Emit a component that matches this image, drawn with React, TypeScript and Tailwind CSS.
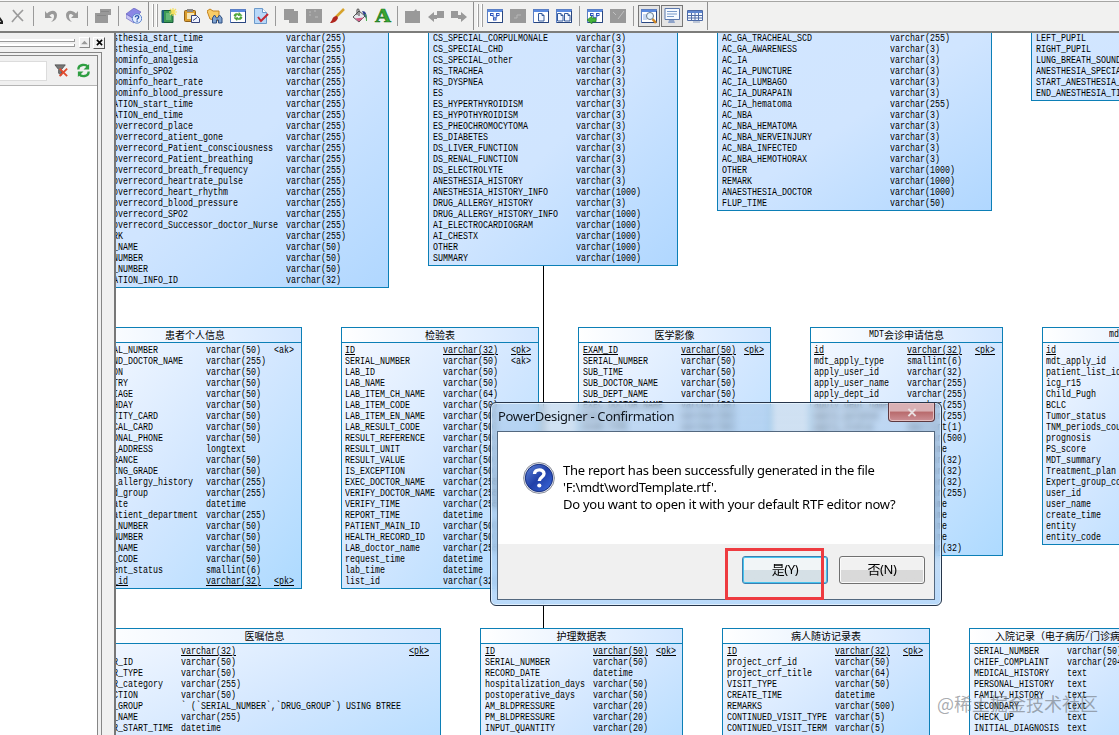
import type { ReactNode } from 'react';

type Row = [name: string, type?: string, key?: string];

interface EntityProps {
  title?: string;
  x: number;
  y: number;
  width: number;
  height: number;
  nameX: number;
  typeX: number;
  keyX?: number;
  rows: Row[];
}

const v = (n: number) => `varchar(${n})`;

const entities: EntityProps[] = [
  {
    x: -36, y: -7, width: 309, height: 262, nameX: 32, typeX: 205,
    rows: [
      ['sthesia_start_time', v(255)],
      ['sthesia_end_time', v(255)],
      ['oominfo_analgesia', v(255)],
      ['oominfo_SPO2', v(255)],
      ['oominfo_heart_rate', v(255)],
      ['oominfo_blood_pressure', v(255)],
      ['ATION_start_time', v(255)],
      ['ATION_end_time', v(255)],
      ['overrecord_place', v(255)],
      ['overrecord_atient_gone', v(255)],
      ['overrecord_Patient_consciousness', v(255)],
      ['overrecord_Patient_breathing', v(255)],
      ['overrecord_breath_frequency', v(255)],
      ['overrecord_heartrate_pulse', v(255)],
      ['overrecord_heart_rhythm', v(255)],
      ['overrecord_blood_pressure', v(255)],
      ['overrecord_SPO2', v(255)],
      ['overrecord_Successor_doctor_Nurse', v(255)],
      ['RK', v(255)],
      ['_NAME', v(50)],
      ['NUMBER', v(50)],
      ['_NUMBER', v(50)],
      ['ATION_INFO_ID', v(32)],
    ],
  },
  {
    x: 312, y: -7, width: 250, height: 240, nameX: 4, typeX: 147,
    rows: [
      ['CS_SPECIAL_CORPULMONALE', v(3)],
      ['CS_SPECIAL_CHD', v(3)],
      ['CS_SPECIAL_other', v(3)],
      ['RS_TRACHEA', v(3)],
      ['RS_DYSPNEA', v(3)],
      ['ES', v(3)],
      ['ES_HYPERTHYROIDISM', v(3)],
      ['ES_HYPOTHYROIDISM', v(3)],
      ['ES_PHEOCHROMOCYTOMA', v(3)],
      ['ES_DIABETES', v(3)],
      ['DS_LIVER_FUNCTION', v(3)],
      ['DS_RENAL_FUNCTION', v(3)],
      ['DS_ELECTROLYTE', v(3)],
      ['ANESTHESIA_HISTORY', v(3)],
      ['ANESTHESIA_HISTORY_INFO', v(1000)],
      ['DRUG_ALLERGY_HISTORY', v(3)],
      ['DRUG_ALLERGY_HISTORY_INFO', v(1000)],
      ['AI_ELECTROCARDIOGRAM', v(1000)],
      ['AI_CHESTX', v(1000)],
      ['OTHER', v(1000)],
      ['SUMMARY', v(1000)],
    ],
  },
  {
    x: 601, y: -7, width: 275, height: 185, nameX: 4, typeX: 172,
    rows: [
      ['AC_GA_TRACHEAL_SCD', v(255)],
      ['AC_GA_AWARENESS', v(3)],
      ['AC_IA', v(3)],
      ['AC_IA_PUNCTURE', v(3)],
      ['AC_IA_LUMBAGO', v(3)],
      ['AC_IA_DURAPAIN', v(3)],
      ['AC_IA_hematoma', v(255)],
      ['AC_NBA', v(3)],
      ['AC_NBA_HEMATOMA', v(3)],
      ['AC_NBA_NERVEINJURY', v(3)],
      ['AC_NBA_INFECTED', v(3)],
      ['AC_NBA_HEMOTHORAX', v(3)],
      ['OTHER', v(1000)],
      ['REMARK', v(1000)],
      ['ANAESTHESIA_DOCTOR', v(1000)],
      ['FLUP_TIME', v(50)],
    ],
  },
  {
    x: 915, y: -7, width: 220, height: 75, nameX: 4, typeX: 180,
    rows: [
      ['LEFT_PUPIL'],
      ['RIGHT_PUPIL'],
      ['LUNG_BREATH_SOUND'],
      ['ANESTHESIA_SPECIAL'],
      ['START_ANESTHESIA_TIME'],
      ['END_ANESTHESIA_TIME'],
    ],
  },
  {
    title: '患者个人信息',
    x: -28, y: 294, width: 214, height: 262, nameX: 24, typeX: 117, keyX: 185,
    rows: [
      ['AL_NUMBER', v(50), '<ak>'],
      ['ND_DOCTOR_NAME', v(255)],
      ['ON', v(50)],
      ['TRY', v(50)],
      ['IAGE', v(50)],
      ['HDAY', v(50)],
      ['TITY_CARD', v(50)],
      ['CAL_CARD', v(50)],
      ['ONAL_PHONE', v(50)],
      ['_ADDRESS', 'longtext'],
      ['RANCE', v(50)],
      ['ING_GRADE', v(50)],
      ['_allergy_history', v(255)],
      ['d_group', v(255)],
      ['ate', 'datetime'],
      ['atient_department', v(255)],
      ['_NUMBER', v(50)],
      ['NUMBER', v(50)],
      ['_NAME', v(50)],
      ['_CODE', v(50)],
      ['ent_status', 'smallint(6)'],
      ['_id', v(32), '<pk>'],
    ],
  },
  {
    title: '检验表',
    x: 225, y: 294, width: 198, height: 262, nameX: 3, typeX: 101, keyX: 169,
    rows: [
      ['ID', v(32), '<pk>'],
      ['SERIAL_NUMBER', v(50), '<ak>'],
      ['LAB_ID', v(50)],
      ['LAB_NAME', v(50)],
      ['LAB_ITEM_CH_NAME', v(64)],
      ['LAB_ITEM_CODE', v(50)],
      ['LAB_ITEM_EN_NAME', v(50)],
      ['LAB_RESULT_CODE', v(50)],
      ['RESULT_REFERENCE', v(50)],
      ['RESULT_UNIT', v(50)],
      ['RESULT_VALUE', v(50)],
      ['IS_EXCEPTION', v(50)],
      ['EXEC_DOCTOR_NAME', v(255)],
      ['VERIFY_DOCTOR_NAME', v(255)],
      ['VERIFY_TIME', v(255)],
      ['REPORT_TIME', 'datetime'],
      ['PATIENT_MAIN_ID', v(50)],
      ['HEALTH_RECORD_ID', v(50)],
      ['LAB_doctor_name', v(255)],
      ['request_time', 'datetime'],
      ['lab_time', 'datetime'],
      ['list_id', v(32)],
    ],
  },
  {
    title: '医学影像',
    x: 462, y: 294, width: 193, height: 240, nameX: 4, typeX: 102, keyX: 165,
    rows: [
      ['EXAM_ID', v(50), '<pk>'],
      ['SERIAL_NUMBER', v(50)],
      ['SUB_TIME', v(50)],
      ['SUB_DOCTOR_NAME', v(50)],
      ['SUB_DEPT_NAME', v(50)],
      ['EXEC_DOCTOR_NAME', v(50)],
      ['EXEC_TIME', v(50)],
      ['EXAM_TYPE', v(50)],
    ],
  },
  {
    title: 'MDT会诊申请信息',
    x: 694, y: 294, width: 193, height: 229, nameX: 3, typeX: 96, keyX: 164,
    rows: [
      ['id', v(32), '<pk>'],
      ['mdt_apply_type', 'smallint(6)'],
      ['apply_user_id', v(32)],
      ['apply_user_name', v(255)],
      ['apply_dept_id', v(255)],
      ['apply_dept_name', v(255)],
      ['apply_purpose', v(255)],
      ['apply_status', 'smallint(1)'],
      ['remark', v(500)],
      ['apply_time', 'datetime'],
      ['serial_id', v(32)],
      ['patient_id', v(32)],
      ['user_id', v(32)],
      ['user_name', v(255)],
      ['start_time', 'datetime'],
      ['end_time', 'datetime'],
      ['create_time', 'datetime'],
      ['update_time', 'datetime'],
      ['entity_code', v(32)],
    ],
  },
  {
    title: 'mdt会诊',
    x: 926, y: 294, width: 168, height: 218, nameX: 3, typeX: 110,
    rows: [
      ['id', v(32), ''],
      ['mdt_apply_id'],
      ['patient_list_id'],
      ['icg_r15'],
      ['Child_Pugh'],
      ['BCLC'],
      ['Tumor_status'],
      ['TNM_periods_count'],
      ['prognosis'],
      ['PS_score'],
      ['MDT_summary'],
      ['Treatment_plan'],
      ['Expert_group_code'],
      ['user_id'],
      ['user_name'],
      ['create_time'],
      ['entity'],
      ['entity_code'],
    ],
  },
  {
    title: '医嘱信息',
    x: -28, y: 595, width: 353, height: 160, nameX: 24, typeX: 92, keyX: 320,
    rows: [
      ['', v(32), '<pk>'],
      ['R_ID', v(50)],
      ['R_TYPE', v(50)],
      ['R_category', v(255)],
      ['CTION', v(50)],
      ['_GROUP', '` (`SERIAL_NUMBER`,`DRUG_GROUP`) USING BTREE'],
      ['_NAME', v(255)],
      ['R_START_TIME', 'datetime'],
    ],
  },
  {
    title: '护理数据表',
    x: 364, y: 595, width: 203, height: 160, nameX: 4, typeX: 112, keyX: 175,
    rows: [
      ['ID', v(50), '<pk>'],
      ['SERIAL_NUMBER', v(50)],
      ['RECORD_DATE', 'datetime'],
      ['hospitalization_days', v(50)],
      ['postoperative_days', v(50)],
      ['AM_BLDPRESSURE', v(20)],
      ['PM_BLDPRESSURE', v(20)],
      ['INPUT_QUANTITY', v(20)],
    ],
  },
  {
    title: '病人随访记录表',
    x: 606, y: 595, width: 208, height: 160, nameX: 4, typeX: 112, keyX: 180,
    rows: [
      ['ID', v(32), '<pk>'],
      ['project_crf_id', v(50)],
      ['project_crf_title', v(64)],
      ['VISIT_TYPE', v(50)],
      ['CREATE_TIME', 'datetime'],
      ['REMARKS', v(500)],
      ['CONTINUED_VISIT_TYPE', v(5)],
      ['CONTINUED_VISIT_TERM', v(5)],
    ],
  },
  {
    title: '入院记录（电子病历/门诊病历）',
    x: 853, y: 595, width: 197, height: 160, nameX: 4, typeX: 97,
    rows: [
      ['SERIAL_NUMBER', v(50)],
      ['CHIEF_COMPLAINT', v(2048)],
      ['MEDICAL_HISTORY', 'text'],
      ['PERSONAL_HISTORY', 'text'],
      ['FAMILY_HISTORY', 'text'],
      ['SECONDARY', 'text'],
      ['CHECK_UP', 'text'],
      ['INITIAL_DIAGNOSIS', 'text'],
    ],
  },
];

// Condensed monospace cell text, 5px per character
const Cell = ({ children, underline }: { children?: string; underline?: boolean }) => (
  <span className="w-0 whitespace-pre">
    <span className={`inline-block origin-left scale-x-[0.833] ${underline ? 'underline underline-offset-1' : ''}`}>
      {children}
    </span>
  </span>
);

const Entity = ({ title, x, y, width, height, nameX, typeX, keyX = typeX + 68, rows }: EntityProps) => (
  <div
    className={`absolute flex flex-col border border-[#0c7fb6] bg-linear-to-br font-['Liberation_Mono','Noto_Sans_CJK_SC',monospace] text-[10px] leading-[11px] text-black ${
      title ? 'from-[#f6f9ff] via-[#d3e7ff] to-[#addAff]' : 'from-[#d2e6ff] via-[#d0e5ff] to-[#b0d7ff]'
    }`}
    style={{ left: x, top: y, width, height }}
  >
    {title && (
      <div className="flex h-[15px] shrink-0 items-center justify-center whitespace-nowrap border-b border-[#0c7fb6] bg-linear-to-r from-white to-[#d4e7ff] pb-[2px]">
        {title.split(/([ -~]+)/).filter(Boolean).map((part, index) =>
          /^[ -~]/.test(part) ? (
            <span key={index} className="pt-px" style={{ width: part.length * 5 }}>
              <Cell>{part}</Cell>
            </span>
          ) : (
            <span key={index} className="font-['Noto_Sans_CJK_SC',sans-serif]">{part}</span>
          )
        )}
      </div>
    )}
    <div className={title ? 'pt-[2px]' : 'pt-[6px]'}>
      {rows.map(([name, type, key], index) => {
        const underline = key === '<pk>' || key === '';
        return (
          <div
            key={index}
            className="grid h-[11px]"
            style={{ paddingLeft: nameX, gridTemplateColumns: `${typeX - nameX}px ${keyX - typeX}px 1fr` }}
          >
            <Cell underline={underline}>{name}</Cell>
            <Cell underline={underline}>{type}</Cell>
            <Cell underline={underline}>{key}</Cell>
          </div>
        );
      })}
    </div>
  </div>
);

const Icon = ({ children }: { children: ReactNode }) => (
  <svg viewBox="0 0 16 16" className="h-4 w-4 shrink-0" fill="none">{children}</svg>
);

const WindowFrame = ({ children }: { children?: ReactNode }) => (
  <Icon>
    <rect x="0.5" y="1.5" width="15" height="13" fill="#fff" stroke="#5b7fc4" />
    <path d="M1 2h14v2H1z" fill="#5a8ae0" />
    <path d="M1 14.500h14.500V3" stroke="#29467f" />
    {children}
  </Icon>
);

const Page = ({ x }: { x: number }) => (
  <path d={`M${x} 5.5h3.5l2 2v5.500h-5.500z M${x + 3.5} 5.500v2h2`} fill="#f4f8ff" stroke="#345b9c" />
);

const Nodes = () => (
  <g stroke="#2d55bb" fill="#dfe9ff">
    <path d="M5 7l3 4 3-4" />
    <rect x="3.500" y="5.500" width="2.500" height="2" />
    <rect x="9.500" y="5.500" width="2.500" height="2" />
    <rect x="6.500" y="10" width="2.500" height="2" />
  </g>
);

const Sep = () => <div className="h-5 w-px shrink-0 bg-[#9a9a9a]" />;

const Grip = () => (
  <div className="flex h-[28px] shrink-0 items-center gap-[2px] border-l border-[#8f8f8f] pl-[3px]">
    <div className="h-[23px] w-[2px] border-r border-[#a0a0a0] bg-white" />
    <div className="h-[23px] w-[2px] border-r border-[#a0a0a0] bg-white" />
  </div>
);

const icons = {
  cut: <Icon><path d="M11 8l5 7M11 15h5" stroke="#222" strokeWidth="2" /></Icon>,
  close: <Icon><path d="M3 2c3 4 6 7 10 11M13 2C9 6 6 9 2 14" stroke="#9b9b9b" strokeWidth="1.700" /></Icon>,
  undo: <Icon><path d="M2 3v7h7L6.500 7.500C9 5 11.500 5.500 11 9c-.3 2-1.500 4-3 5 4-1 6-3.500 6-7 0-5-6-6-10-1.500z" fill="#999" /></Icon>,
  redo: <Icon><path d="M14 3v7H7l2.500-2.500C7 5 4.500 5.500 5 9c.3 2 1.500 4 3 5-4-1-6-3.500-6-7 0-5 6-6 10-1.500z" fill="#999" /></Icon>,
  props: <Icon><path d="M5 1h11v6h-3v8H0V5h5z" fill="#999" /><path d="M2 7.500h9M6 3.500h8" stroke="#888" /></Icon>,
  help: (
    <Icon>
      <path d="M0 6l8-6 7 4-7 7z" fill="#8a86e5" stroke="#5d57b5" strokeWidth=".6" />
      <path d="M0 6l8 5v4L0 10z" fill="#c9c6f5" stroke="#5d57b5" strokeWidth=".6" />
      <circle cx="11" cy="10.500" r="4.700" fill="#e3edff" stroke="#5b82cf" />
      <path d="M9.300 9.300c0-2.200 3.600-2.200 3.400 0 0 1.200-1.600 1.200-1.600 2.400M11.100 12.500v1.300" stroke="#2450a8" strokeWidth="1.300" />
    </Icon>
  ),
  model: (
    <Icon>
      <path d="M1 2.500h11v12H1z" fill="#3d9a55" stroke="#175c3b" />
      <path d="M1 2h2v13H1z" fill="#1d5c7c" />
      <path d="M5 5h5v7H5z" fill="#66b876" />
      <path d="M12 0v8M8 4h8M9 1l6 6M15 1L9 7" stroke="#f3df5e" strokeWidth="1.200" />
    </Icon>
  ),
  paste: (
    <Icon>
      <rect x="0.500" y="2.500" width="11" height="11" rx="1" fill="#d99c2d" stroke="#906018" />
      <path d="M3 1h6v3H3z" fill="#888" />
      <path d="M3 5h7v6H3z" fill="#f6e5b4" />
      <path d="M7.500 7.500h5l3 3v4h-8z" fill="#eef2ff" stroke="#35437b" />
      <path d="M9 12.500l4-3" stroke="#33447c" />
    </Icon>
  ),
  find: (
    <Icon>
      <path d="M0 3l3-2 3 2h6v10l-9-2z" fill="#f8cc66" stroke="#c48320" />
      <path d="M5.500 15v-5l2-3 2 3h1l2-3 2.500 3v5h-3.500v-3h-2v3z" fill="#7fa2cf" stroke="#2e4f80" />
    </Icon>
  ),
  swap: (
    <WindowFrame>
      <path d="M4 8c0-3 3-3 5-2V4.500L12 7.500H8L9 7C7 6.500 6 7 6 8.500zM12 9c0 3-3 3-5 2v1.500L4 9.700h4l-1 .5c2 .5 3 0 3-1.500z" fill="#51ac37" stroke="#329225" strokeWidth=".5" />
    </WindowFrame>
  ),
  check: (
    <Icon>
      <path d="M1.500.5h8l4 4v11h-12z" fill="#b9d8f8" stroke="#6c9acb" />
      <path d="M9.500.5v4h4" fill="#fff" stroke="#6c9acb" />
      <path d="M5 9l3 4 7-7" stroke="#c32934" strokeWidth="2" />
    </Icon>
  ),
  copy: <Icon><path d="M1 1h10v2h4v12H6v-3H1z" fill="#999" /></Icon>,
  picture: <Icon><path d="M0 1h16v14H0z" fill="#999" /><path d="M3 4h2M8 3h2M3 7h2M9 9h3" stroke="#bbb" /></Icon>,
  brush: (
    <Icon>
      <path d="M15 1L7 9" stroke="#d7a32b" strokeWidth="2.500" />
      <path d="M8 8c-3 0-4 1-5 4l-2 3c4 0 7-2 8-5z" fill="#b0261e" />
    </Icon>
  ),
  bucket: (
    <Icon>
      <path d="M1 9l6-6 6 5-6 6z" fill="#e4e7ec" stroke="#555" />
      <path d="M5 7V2c0-1.500 2-1.500 2 0v6" stroke="#444" />
      <path d="M10 3c4 0 5 3 5 10-1-4-3-5-4-8z" fill="#2c3d8d" />
      <path d="M13 6c1 2 1.500 4 1.500 7" stroke="#49b34a" />
      <path d="M3 10.500l4 3 5-4z" fill="#d45a86" />
    </Icon>
  ),
  folder: <Icon><path d="M0 3h9l2-2 1 2h3v12H0z" fill="#999" /></Icon>,
  left: <Icon><path d="M0 9l6-5v3h3V3h7v7H9v1H6v3z" fill="#999" /></Icon>,
  right: <Icon><path d="M16 9l-6-5v3H7V3H0v7h7v1h3v3z" fill="#999" /></Icon>,
  disabled: <Icon><path d="M0 1h16v14H0z" fill="#999" /><path d="M4 10h3V7h4" stroke="#b6b6b6" /></Icon>,
  disabled2: <Icon><path d="M0 1h16v14H0z" fill="#999" /><path d="M3 4l3 3M8 11l6-8" stroke="#c0c0c0" /></Icon>,
  diagram: <WindowFrame><Nodes /></WindowFrame>,
  page: <WindowFrame><Page x={5.5} /></WindowFrame>,
  pages: <WindowFrame><Page x={1.500} /><Page x={8.500} /></WindowFrame>,
  open: (
    <WindowFrame>
      <Nodes />
      <path d="M0 12l5-4v2h4v4H5v2z" fill="#45b43b" stroke="#227e24" strokeWidth=".6" />
    </WindowFrame>
  ),
  browse: (
    <WindowFrame>
      <path d="M2 6h4v6H2z" fill="#c7d8f2" />
      <circle cx="9" cy="8" r="3.500" fill="#e7f5ff" stroke="#67788b" />
      <path d="M11.500 11l3.500 4" stroke="#d18825" strokeWidth="2.500" />
    </WindowFrame>
  ),
  output: (
    <Icon>
      <path d="M1 .5h14.500v11H1z" fill="#f6faff" stroke="#5b78ac" />
      <path d="M3 3.500h10M3 6h10M3 8.500h7" stroke="#799ac9" />
      <path d="M5 12h5l1 3H4z" fill="#8ea3c9" />
    </Icon>
  ),
  table: (
    <Icon>
      <path d="M.5 2.500h15v10H.5z" fill="#f6faff" stroke="#4d6aa6" />
      <path d="M1 3h14v2H1z" fill="#6087cf" />
      <path d="M1 7.500h14M1 10h14M4.500 5v8M8 5v8M11.500 5v8" stroke="#526fa7" />
      <path d="M6 14h7" stroke="#8a9cbc" />
    </Icon>
  ),
};

const Toolbar = () => (
  <div className="flex h-[33px] shrink-0 items-center border-b-2 border-[#7d7d7b] bg-[#f1f1f0] shadow-[inset_0_1px_0_#f8f8f8,inset_0_2px_0_#a6a6a4]">
    <div className="flex items-center">
      <div className="-ml-[13px] mr-[7px]">{icons.cut}</div>
      {icons.close}
      <div className="ml-[7px] mr-[9px]"><Sep /></div>
      <div className="flex gap-[5px]">{icons.undo}{icons.redo}</div>
      <div className="mx-[7px]"><Sep /></div>
      {icons.props}
      <div className="mx-[7px]"><Sep /></div>
      {icons.help}
      <div className="ml-[6px] mr-[3px]"><Grip /></div>
    </div>
    <div className="flex items-center gap-[7px]">
      {icons.model}{icons.paste}{icons.find}{icons.swap}{icons.check}
      <div className="-ml-px"><Sep /></div>
      {icons.copy}{icons.picture}{icons.brush}{icons.bucket}
      <svg viewBox="0 0 16 16" className="h-4 w-4 shrink-0 overflow-visible">
        <text x="0" y="14" fontFamily="Liberation Serif" fontWeight="bold" fontSize="18" textLength="16" lengthAdjust="spacingAndGlyphs" fill="#38a832" stroke="#257f25" strokeWidth=".7">A</text>
      </svg>
      <div className="-ml-px"><Sep /></div>
      {icons.folder}{icons.left}{icons.right}
    </div>
    <div className="ml-[6px] mr-1"><Grip /></div>
    <div className="flex items-center gap-[7px]">
      {icons.diagram}{icons.disabled}{icons.page}{icons.pages}
      <Sep />
      {icons.open}{icons.disabled2}
    </div>
    <div className="ml-[7px] mr-[4px]"><Sep /></div>
    <div className="flex h-[22px] w-[22px] items-center justify-center border border-[#777] bg-[#e4e4e4]">{icons.browse}</div>
    <div className="ml-px mr-1 flex h-[22px] w-[22px] items-center justify-center border border-[#777] bg-[#e4e4e4]">{icons.output}</div>
    {icons.table}
    <div className="ml-1 h-[28px] w-px bg-[#8f8f8f]" />
  </div>
);

const Sidebar = () => (
  <aside className="flex w-[116px] shrink-0 flex-col border-r-2 border-[#777] bg-[#f0f0f0]">
    <div className="flex h-[19px] items-center gap-[3px]">
      <div className="mr-px flex w-[75px] flex-col gap-[2px]">
        <div className="h-[3px] border-b border-r border-[#999] bg-white" />
        <div className="h-[3px] border-b border-r border-[#999] bg-white" />
      </div>
      <button className="flex h-[11px] w-[11px] items-center justify-center border border-[#888] border-l-white border-t-white">
        <svg viewBox="0 0 8 6" className="h-[5px] w-[7px]"><path d="M0 5l4-4 4 4z" fill="#999" /></svg>
      </button>
      <button className="flex h-[12px] w-[12px] items-center justify-center border border-[#555] border-l-white border-t-white">
        <svg viewBox="0 0 8 8" className="h-[7px] w-[7px]"><path d="M1 1l6 6M7 1L1 7" stroke="#000" strokeWidth="1.800" /></svg>
      </button>
    </div>
    <div className="flex w-[102px] grow flex-col border-r border-t border-[#868686]">
      <div className="mt-[2px] flex w-[98px] grow flex-col border-r border-t border-[#868686] bg-white">
        <div className="flex h-[30px] items-center border-b border-[#b5b5b5] bg-[#f0f0f0]">
          <div className="h-[20px] w-[47px] border border-l-0 border-[#dcdcdc] bg-white" />
          <svg viewBox="0 0 16 16" className="ml-[7px] h-[15px] w-[15px]" fill="none">
            <path d="M1 2h11L8 7v6l-3-2V7z" fill="#777" stroke="#555" />
            <path d="M6 6l8 8M14 6l-8 8" stroke="#e24a2e" strokeWidth="2" />
          </svg>
          <svg viewBox="0 0 16 16" className="ml-[7px] h-[15px] w-[15px]" fill="none">
            <path d="M2.500 7c0-6 8-6 10-3M13.500 9c0 6-8 6-10 3" stroke="#2f9e42" strokeWidth="2.500" />
            <path d="M14 1v6H8zM2 15V9h6z" fill="#2f9e42" />
          </svg>
        </div>
      </div>
    </div>
  </aside>
);

const Dialog = () => (
  <div className="absolute left-[490px] top-[402px] flex h-[204px] w-[452px] flex-col rounded-[6px] border border-[#26354a] bg-linear-to-b from-[#a9c8e88c] via-[#9dc0e480] to-[#b0d5fae0] px-[6px] pb-[5px] shadow-[inset_0_0_0_1px_#e9f5ffcc] backdrop-blur-[3px]">
    <div className="flex h-[28px] shrink-0 items-start justify-between pl-[1px]">
      <h1 className="pt-[4px] font-['Noto_Sans',sans-serif] text-[13px] leading-[19px] tracking-[-0.32px] text-[#10161e]">PowerDesigner - Confirmation</h1>
      <button className="flex h-[19px] w-[47px] items-center justify-center rounded-b-[4px] border border-t-0 border-[#5d3940] bg-linear-to-b from-[#d9b0b4] from-45% via-[#b86a6c] via-50% to-[#cc9096] shadow-[inset_0_0_0_1px_#e5bfc0]">
        <svg viewBox="0 0 10 10" className="h-[9px] w-[10px]"><path d="M1 1l8 8M9 1L1 9" stroke="#e9dfe0" strokeWidth="2.200" /></svg>
      </button>
    </div>
    <div className="flex grow flex-col border border-[#53687f] bg-[#f0f0f0]">
      <div className="flex h-[112px] shrink-0 bg-white pl-[25px] pt-[30px]">
        <svg viewBox="0 0 32 32" className="h-[32px] w-[32px] shrink-0">
          <defs>
            <linearGradient id="ball" x1="0" y1="0" x2="1" y2="1">
              <stop offset="0" stopColor="#6086d8" />
              <stop offset=".5" stopColor="#2140a8" />
              <stop offset="1" stopColor="#3c6ce0" />
            </linearGradient>
          </defs>
          <circle cx="16" cy="16" r="15.400" fill="#e6e8ee" stroke="#8c909c" />
          <circle cx="16" cy="16" r="13.700" fill="url(#ball)" stroke="#183080" />
          <path d="M11.500 12c0-5.500 9.500-5.500 9.500-.3 0 3.600-4.700 3.500-4.700 7.300" fill="none" stroke="#fff" strokeWidth="3.400" />
          <circle cx="16.300" cy="23.500" r="2.100" fill="#fff" />
        </svg>
        <p className="ml-[8px] whitespace-nowrap font-['Noto_Sans',sans-serif] text-[13px] leading-[17px] tracking-[-0.26px] text-black">
          The report has been successfully generated in the file<br />
          'F:\mdt\wordTemplate.rtf'.<br />
          Do you want to open it with your default RTF editor now?
        </p>
      </div>
      <div className="flex justify-end gap-[11px] pr-[9px] pt-[12px] font-['Noto_Sans','Noto_Sans_CJK_SC',sans-serif] text-[13px] tracking-[-0.4px] text-black">
        <button className="h-[28px] w-[86px] rounded-[3px] border border-[#3c7fb1] bg-linear-to-b from-[#f1f5f7] from-50% to-[#d5e0e6] to-50% shadow-[inset_0_0_0_1px_#46c4ee]">是(Y)</button>
        <button className="h-[28px] w-[86px] rounded-[3px] border border-[#707070] bg-linear-to-b from-[#f1f1f1] from-50% to-[#d9d9d9] to-50% shadow-[inset_0_0_0_1px_#fafafa]">否(N)</button>
      </div>
    </div>
  </div>
);

const App = () => {
  return (
    <div className="relative flex h-[735px] w-[1119px] flex-col overflow-hidden bg-white">
      <Toolbar />
      <div className="flex min-h-0 grow">
        <Sidebar />
        <main className="relative grow overflow-hidden bg-white">
          <div className="absolute left-[427px] top-[230px] h-[370px] w-px bg-black" />
          {entities.map((entity, index) => (
            <Entity key={index} {...entity} />
          ))}
        </main>
      </div>
      <Dialog />
      <div className="absolute left-[725px] top-[548px] h-[52px] w-[99px] border-[3px] border-[#ee3b40]" />
      <div className="absolute left-[937px] top-[690px] whitespace-nowrap font-['Noto_Sans_CJK_SC',sans-serif] text-[18px] leading-[26px] text-[#6f747a99]">@稀土掘金技术社区</div>
    </div>
  );
};

export default App;
